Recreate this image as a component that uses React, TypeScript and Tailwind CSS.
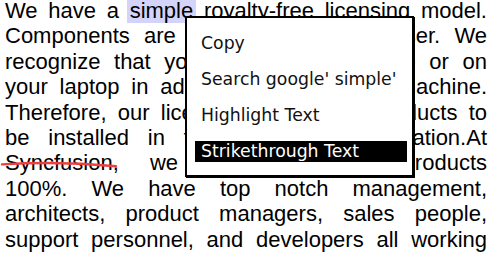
import React from 'react';

const lines: React.ReactNode[] = [
    <>
        We have a{' '}
        <span className="bg-[#d4d4fa] shadow-[3px_0_0_#d4d4fa,-3px_0_0_#d4d4fa]">simple</span> royalty-free licensing model.
    </>,
    'Components are licensed for every user. We',
    'recognize that you may work at home or on',
    'your laptop in addition to your office machine.',
    'Therefore, our licensing allows our products to',
    'be installed in two places of installation.At',
    <>
        <span className="relative">
            Syncfusion
            <svg className="absolute left-[-4px] top-[10px] w-[116px] h-[8px] overflow-visible" viewBox="0 0 116 8" fill="none">
                <path d="M1 4.4 Q 58 1 115 6.2" stroke="#ef3e3e" strokeWidth="2.4" strokeLinecap="round" />
            </svg>
        </span>
        , we guarantee our products
    </>,
    '100%. We have top notch management,',
    'architects, product managers, sales people,',
    'support personnel, and developers all working',
];

const menuItems = ['Copy', "Search google' simple'", 'Highlight Text', 'Strikethrough Text'];

export default function App() {
    const active = 3;

    return (
        <div className="relative w-[500px] h-[260px] overflow-hidden bg-white text-black">
            <div className="-mt-[2px] pl-[5px] pr-[13px] font-['Liberation_Sans',Arial,sans-serif] text-[22px] leading-[25.4px]">
                {lines.map((line, i) => (
                    <p key={i} className="text-justify [text-align-last:justify]">{line}</p>
                ))}
            </div>

            {/* context menu */}
            <div className="absolute left-[185px] top-[16px] w-[229px] h-[161px] border-2 border-black shadow-[1px_1px_0_#000] bg-white pt-[15px] pl-[8px] pr-[5px] flex flex-col gap-[15px] font-['DejaVu_Sans',Verdana,sans-serif] text-[17.3px] leading-[21px]">
                {menuItems.map((item, i) => (
                    <div key={item} className={`px-[6px] whitespace-nowrap ${i === active ? 'bg-black text-white' : 'text-[#111]'}`}>
                        {item}
                    </div>
                ))}
            </div>
        </div>
    );
}
